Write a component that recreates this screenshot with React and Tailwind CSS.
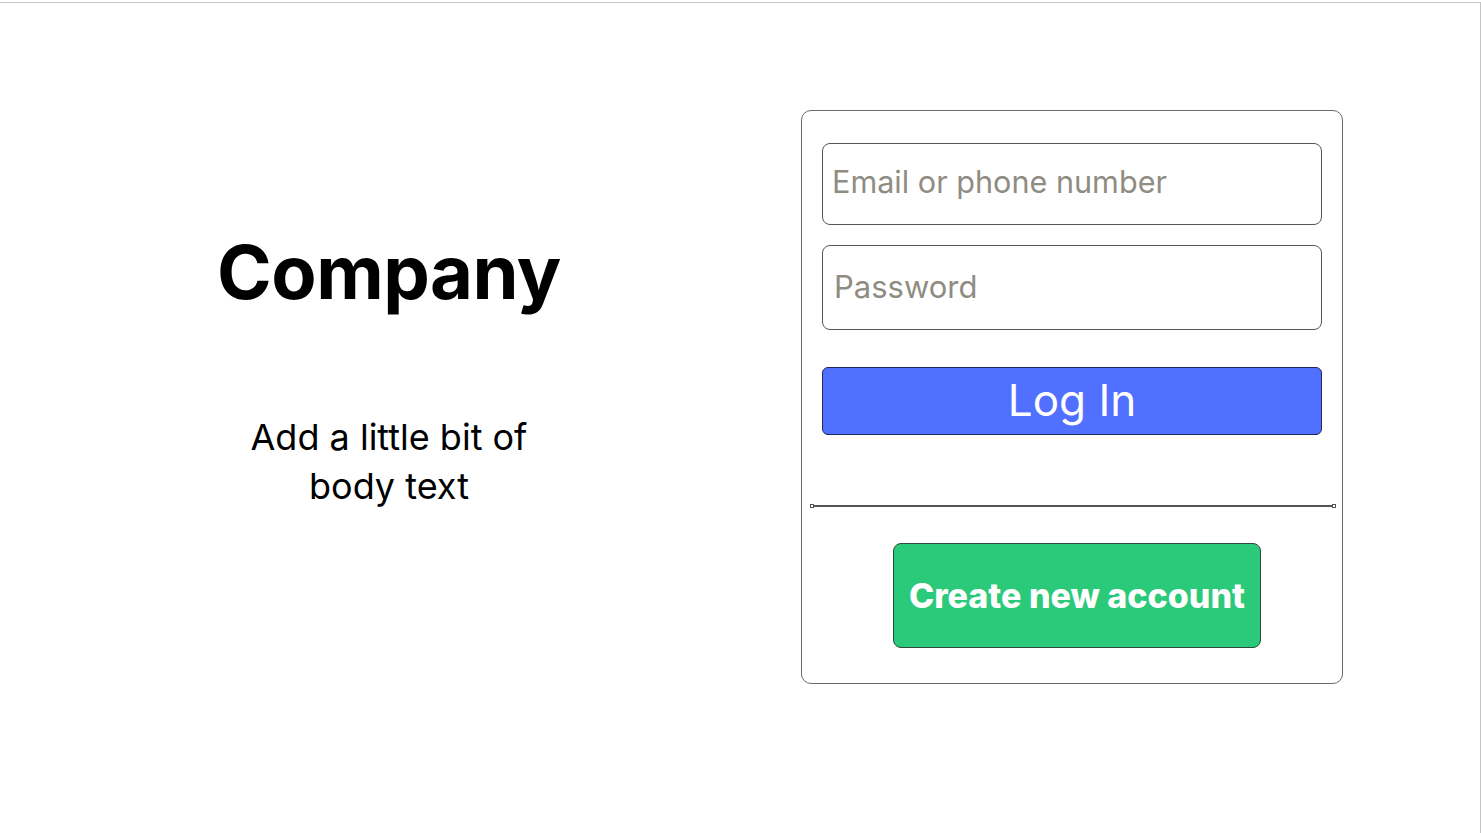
export default function App() {
  return (
    <div className="w-[1481px] h-[833px] bg-white pt-[2px] overflow-hidden" style={{ fontFamily: 'Inter, "Open Sans", sans-serif' }}>
      <div className="h-[831px] border-t border-r border-[#c4c4c4] flex">
        <div className="w-[778px] shrink-0 flex flex-col items-center">
          <h1 className="mt-[225px] text-[74px] leading-[88px] font-bold text-black tracking-[-0.5px]">Company</h1>
          <p className="mt-[97px] text-[36px] leading-[49px] text-black text-center w-[340px]">
            Add a little bit of body text
          </p>
        </div>
        <div className="ml-[23px] mt-[107px] w-[542px] h-[574px] border border-[#6b6b6b] rounded-[10px] flex flex-col">
          <div className="ml-[20px] mt-[32px] w-[500px] h-[82px] border border-[#555] rounded-[8px] flex items-center pl-[9px] pb-[3px]">
            <span className="text-[30.6px] text-[#8f8c82] leading-none">Email or phone number</span>
          </div>
          <div className="ml-[20px] mt-[20px] w-[500px] h-[85px] border border-[#555] rounded-[8px] flex items-center pl-[11px] pb-[2px]">
            <span className="text-[31px] text-[#8f8c82] leading-none">Password</span>
          </div>
          <div className="ml-[20px] mt-[37px] w-[500px] h-[68px] border border-[#1e2a5a] rounded-[6px] bg-[#5170ff] flex items-center justify-center pb-[3px]">
            <span className="text-[44px] text-white leading-none">Log In</span>
          </div>
          <div className="ml-[8px] mt-[70px] w-[526px] h-[2px] flex items-center">
            <div className="w-[4px] h-[4px] border border-[#555] bg-white"></div>
            <div className="flex-1 h-[1.5px] bg-[#555]"></div>
            <div className="w-[4px] h-[4px] border border-[#555] bg-white"></div>
          </div>
          <div className="ml-[91px] mt-[36px] w-[368px] h-[105px] border border-[#2d4a3a] rounded-[8px] bg-[#2bc97a] flex items-center justify-center">
            <span className="text-[34px] font-extrabold text-white leading-none">Create new account</span>
          </div>
        </div>
      </div>
    </div>
  );
}
